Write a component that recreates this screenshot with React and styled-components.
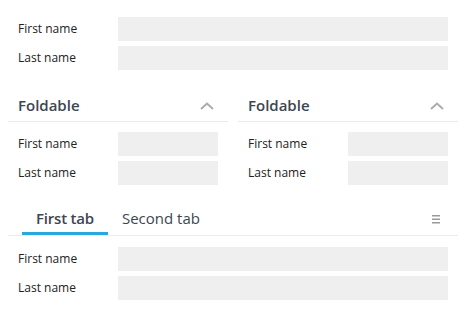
import React, { useState } from "react";
import styled, { createGlobalStyle } from "styled-components";

const GlobalStyle = createGlobalStyle`
  body {
    margin: 0;
    background: #fff;
    font-family: "Open Sans", "Liberation Sans", sans-serif;
  }
`;

const Page = styled.div`
  width: 450px;
  margin-left: 8px;
  padding-top: 17px;
  display: flex;
  flex-direction: column;
`;

const Form = styled.div`
  display: flex;
  flex-direction: column;
  gap: 5px;
  padding: ${({ pad }) => pad || "0 10px"};
`;

const Row = styled.div`
  display: flex;
  align-items: center;
  height: 24px;
`;

const Label = styled.label`
  width: 100px;
  flex: none;
  font-size: 12px;
  line-height: 16px;
  color: #222;
`;

const Input = styled.div`
  height: 24px;
  background: #efefef;
  flex: ${({ fixed }) => (fixed ? "none" : "1")};
  width: ${({ fixed }) => (fixed ? `${fixed}px` : "auto")};
`;

const Panels = styled.div`
  display: grid;
  grid-template-columns: 1fr 1fr;
  gap: 10px;
  margin-top: 19px;
`;

const Panel = styled.section`
  display: flex;
  flex-direction: column;
`;

const PanelHeader = styled.div`
  height: 32px;
  display: flex;
  align-items: center;
  justify-content: space-between;
  padding: 0 14px 0 10px;
  border-bottom: 1px solid #ebebeb;
  cursor: pointer;
`;

const PanelTitle = styled.span`
  font-size: 15px;
  line-height: 20px;
  font-weight: 600;
  color: #3d4652;
`;

const Chevron = styled.svg`
  width: 14px;
  height: 8px;
  margin-top: 2px;
  transform: ${({ open }) => (open ? "none" : "rotate(180deg)")};
`;

const Tabs = styled.div`
  margin-top: 14px;
  display: flex;
  flex-direction: column;
`;

const TabStrip = styled.div`
  display: flex;
  align-items: flex-end;
  padding-left: 14px;
  border-bottom: 1px solid #ebebeb;
`;

const Tab = styled.button`
  border: none;
  background: none;
  font-family: inherit;
  font-size: 15px;
  line-height: 20px;
  font-weight: ${({ active }) => (active ? 600 : 400)};
  letter-spacing: ${({ active }) => (active ? "-0.2px" : "0")};
  color: #3d4652;
  padding: 9px 14px 4px;
  border-bottom: 3px solid ${({ active }) => (active ? "#29a8e0" : "transparent")};
  cursor: pointer;
`;

const Menu = styled.svg`
  width: 8px;
  height: 9px;
  margin: 0 18px 11px auto;
`;

const TabBody = styled.div`
  padding-top: 11px;
`;

function NameFields({ inputWidth, pad }) {
  return (
    <Form pad={pad}>
      <Row>
        <Label>First name</Label>
        <Input fixed={inputWidth} />
      </Row>
      <Row>
        <Label>Last name</Label>
        <Input fixed={inputWidth} />
      </Row>
    </Form>
  );
}

function Foldable({ title }) {
  const [open, setOpen] = useState(true);
  return (
    <Panel>
      <PanelHeader onClick={() => setOpen(!open)}>
        <PanelTitle>{title}</PanelTitle>
        <Chevron open={open} viewBox="0 0 14 8">
          <polyline points="1,7 7,1.5 13,7" fill="none" stroke="#acacac" strokeWidth="2" />
        </Chevron>
      </PanelHeader>
      {open && <NameFields inputWidth={100} pad="10px 10px 0" />}
    </Panel>
  );
}

export default function App() {
  const [tab, setTab] = useState(0);
  return (
    <>
      <GlobalStyle />
      <Page>
        <NameFields />
        <Panels>
          <Foldable title="Foldable" />
          <Foldable title="Foldable" />
        </Panels>
        <Tabs>
          <TabStrip>
            <Tab active={tab === 0} onClick={() => setTab(0)}>First tab</Tab>
            <Tab active={tab === 1} onClick={() => setTab(1)}>Second tab</Tab>
            <Menu viewBox="0 0 8 9">
              <rect x="0" y="0" width="8" height="1.5" fill="#999" />
              <rect x="0" y="3.5" width="8" height="1.5" fill="#999" />
              <rect x="0" y="7" width="8" height="1.5" fill="#999" />
            </Menu>
          </TabStrip>
          <TabBody>
            <NameFields />
          </TabBody>
        </Tabs>
      </Page>
    </>
  );
}
